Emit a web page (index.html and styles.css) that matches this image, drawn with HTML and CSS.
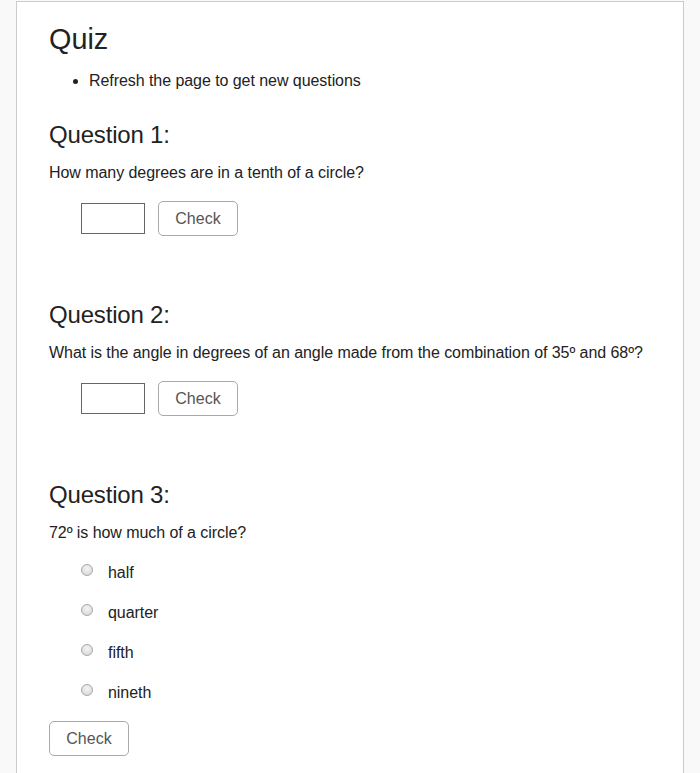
FILE: index.html
```html
<!DOCTYPE html>
<html>
<head>
<meta charset="utf-8">
<link rel="stylesheet" href="styles.css">
</head>
<body>
<div class="page">
  <h1 class="title">Quiz</h1>
  <ul class="notes">
    <li>Refresh the page to get new questions</li>
  </ul>

  <section class="question">
    <h2 class="q-title">Question 1:</h2>
    <p class="q-text">How many degrees are in a tenth of a circle?</p>
    <div class="answer-row">
      <input class="answer" type="text">
      <button class="check">Check</button>
    </div>
  </section>

  <section class="question">
    <h2 class="q-title">Question 2:</h2>
    <p class="q-text">What is the angle in degrees of an angle made from the combination of 35º and 68º?</p>
    <div class="answer-row">
      <input class="answer" type="text">
      <button class="check">Check</button>
    </div>
  </section>

  <section class="question last">
    <h2 class="q-title">Question 3:</h2>
    <p class="q-text">72º is how much of a circle?</p>
    <div class="options">
      <label class="option"><input type="radio" name="q3" class="radio"><span>half</span></label>
      <label class="option"><input type="radio" name="q3" class="radio"><span>quarter</span></label>
      <label class="option"><input type="radio" name="q3" class="radio"><span>fifth</span></label>
      <label class="option"><input type="radio" name="q3" class="radio"><span>nineth</span></label>
    </div>
    <button class="check solo">Check</button>
  </section>
</div>
</body>
</html>
```

FILE: styles.css
```css
html, body {
  margin: 0;
  padding: 0;
  background: #f9f9f9;
}
body {
  font-family: "Liberation Sans", Arial, sans-serif;
  color: #222;
  padding-top: 1px;
}
.page {
  box-sizing: border-box;
  width: 668px;
  margin: 0 auto;
  background: #fff;
  border: 1px solid #cccccc;
  padding: 19px 32px 20px 32px;
  min-height: 800px;
}
.title {
  font-size: 28.8px;
  font-weight: normal;
  line-height: 36px;
  margin: 0;
}
.notes {
  margin: 14px 0 0 0;
  padding-left: 40px;
  font-size: 16px;
  line-height: 20px;
  letter-spacing: -0.06px;
}
.question {
  margin-top: 29px;
}
.question + .question {
  margin-top: 64px;
}
.q-title {
  font-size: 24px;
  font-weight: normal;
  line-height: 30px;
  margin: 0;
  letter-spacing: -0.18px;
}
.q-text {
  font-size: 16px;
  line-height: 22px;
  margin: 12px 0 0 0;
  letter-spacing: -0.06px;
}
.answer-row {
  display: flex;
  align-items: center;
  gap: 13px;
  margin-top: 17px;
  padding-left: 32px;
  height: 35px;
}
.answer {
  box-sizing: border-box;
  width: 64px;
  height: 31px;
  border: 1px solid #666;
  margin: 0;
  padding: 2px 4px;
  font-size: 16px;
  background: #fff;
}
.check {
  box-sizing: border-box;
  width: 80px;
  height: 35px;
  border: 1px solid #aaa;
  border-radius: 5px;
  background: #fff;
  color: #555;
  font-family: "Liberation Sans", Arial, sans-serif;
  font-size: 16px;
  padding: 0;
  margin: 0;
}
.options {
  margin-top: 9px;
  padding-left: 32px;
}
.option {
  display: flex;
  align-items: center;
  height: 40px;
  font-size: 16px;
  letter-spacing: -0.06px;
}
.radio {
  appearance: none;
  -webkit-appearance: none;
  box-sizing: border-box;
  width: 12px;
  height: 12px;
  margin: 0 15px 6px 0;
  border-radius: 50%;
  border: 1px solid #a9a9a9;
  background: radial-gradient(circle at 50% 35%, #f4f4f4 0%, #dcdcdc 70%, #cfcfcf 100%);
}
.check.solo {
  margin-top: 8px;
}
```
